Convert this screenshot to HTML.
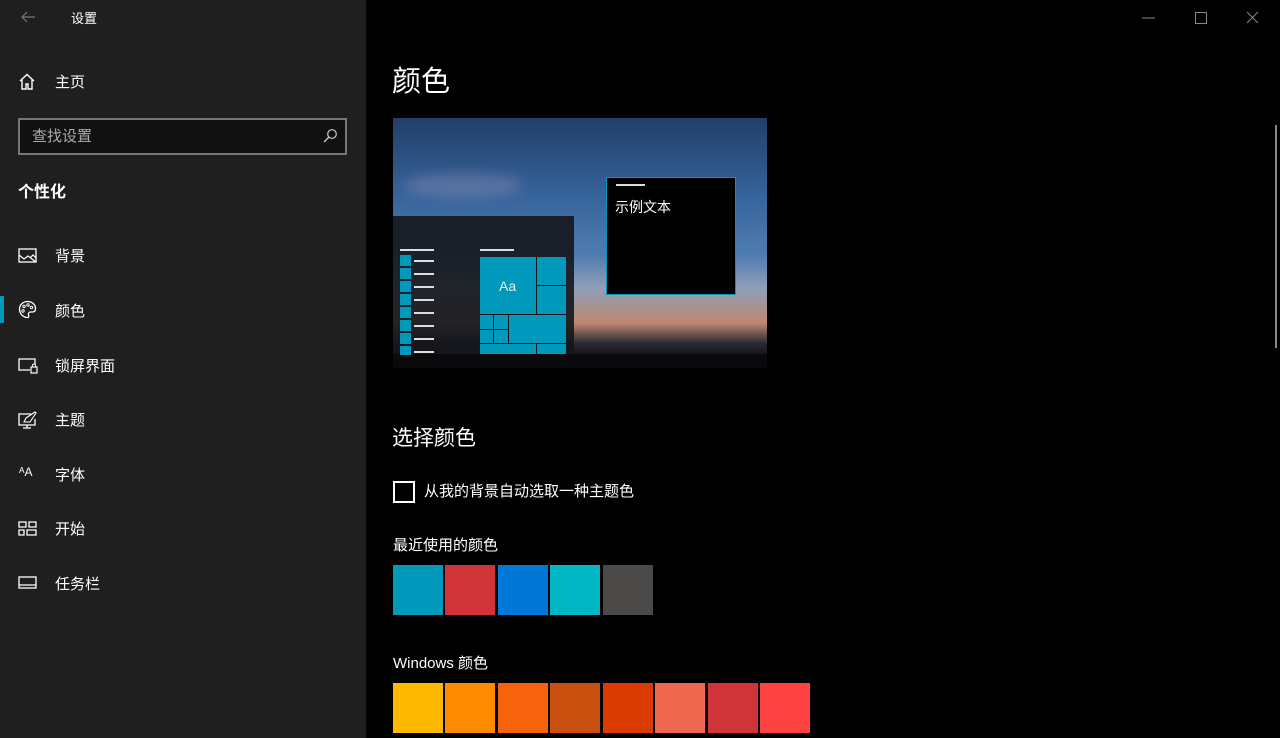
<!DOCTYPE html>
<html><head><meta charset="utf-8"><style>
*{margin:0;padding:0;box-sizing:border-box}
body{width:1280px;height:738px;background:#000;overflow:hidden;position:relative;font-family:"Liberation Sans","Noto Sans CJK SC",sans-serif;color:#fff}
.side{position:absolute;left:0;top:0;width:366px;height:738px;background:#1f1f1f}
.t{position:absolute;white-space:nowrap}
.nav{position:absolute;left:55px;font-size:15px;margin-top:-2px}
.ic{position:absolute;left:18px}
.sw{position:absolute;width:50px;height:50px}
</style></head><body>
<div class="side">
<svg class="ic" style="left:20px;top:10px" width="16" height="14" viewBox="0 0 16 14"><path d="M15 7H2M7 2L2 7l5 5" stroke="#777" fill="none" stroke-width="1.2"/></svg>
<div class="t" style="left:71px;top:8px;font-size:13px">设置</div>
<svg class="ic" style="top:73px" width="18" height="17" viewBox="0 0 18 17"><path d="M2 8L9 1.5 16 8M4 6.5V16h4v-5h2v5h4V6.5" stroke="#fff" fill="none" stroke-width="1.4"/></svg>
<div class="nav" style="top:73px">主页</div>
<div style="position:absolute;left:18px;top:118px;width:329px;height:37px;border:2px solid #777;background:#111"></div>
<div class="t" style="left:32px;top:125px;font-size:15px;color:#aaa">查找设置</div>
<svg style="position:absolute;left:322px;top:128px" width="16" height="16" viewBox="0 0 16 16"><circle cx="10" cy="6" r="4.3" stroke="#ccc" fill="none" stroke-width="1.2"/><path d="M7 9L2 14" stroke="#ccc" stroke-width="1.3"/></svg>
<div class="t" style="left:18px;top:178px;font-size:16px;font-weight:bold">个性化</div>
<svg class="ic" style="top:248px" width="19" height="16" viewBox="0 0 19 16"><rect x="1" y="1" width="17" height="13" stroke="#fff" fill="none" stroke-width="1.3"/><path d="M1 7l5 4 4-3 8 6M12 10l3-3 3 3" stroke="#fff" fill="none" stroke-width="1.2"/></svg>
<div class="nav" style="top:247px">背景</div>
<div style="position:absolute;left:0;top:296px;width:4px;height:27px;background:#0099bc"></div>
<svg class="ic" style="top:300px" width="19" height="19" viewBox="0 0 19 19"><path d="M9.5 1.5C5 1.5 1.5 5 1.5 9c0 4.5 3.5 8.5 8 8.5 1.5 0 1.5-1.5 1-2.5-.5-1.5.5-3 2-3h2c2 0 3-1.5 3-3.5 0-4-3.5-7-8-7z" stroke="#fff" fill="none" stroke-width="1.3"/><circle cx="6" cy="6.5" r="1.2" stroke="#fff" fill="none"/><circle cx="10" cy="5" r="1.2" stroke="#fff" fill="none"/><circle cx="13.5" cy="7.5" r="1.2" stroke="#fff" fill="none"/><circle cx="5" cy="11" r="1.2" stroke="#fff" fill="none"/></svg>
<div class="nav" style="top:302px">颜色</div>
<svg class="ic" style="top:357px" width="20" height="17" viewBox="0 0 20 17"><path d="M12 13H1V2h16v5" stroke="#fff" fill="none" stroke-width="1.3"/><rect x="13" y="10" width="6" height="6" stroke="#fff" fill="none" stroke-width="1.2"/><path d="M14.5 10V8.5a1.5 1.5 0 013 0V10" stroke="#fff" fill="none"/></svg>
<div class="nav" style="top:357px">锁屏界面</div>
<svg class="ic" style="top:411px" width="20" height="19" viewBox="0 0 20 19"><path d="M13 3H1v11h16V8M5 17h8M9 14v3" stroke="#fff" fill="none" stroke-width="1.3"/><path d="M6 11l2-4 9-6 1 1-6 9z" stroke="#fff" fill="none" stroke-width="1.1"/></svg>
<div class="nav" style="top:411px">主题</div>
<div class="t" style="left:19px;top:465px;font-size:12px">ᴬA</div>
<div class="nav" style="top:466px">字体</div>
<svg class="ic" style="top:521px" width="19" height="15" viewBox="0 0 19 15"><path d="M1 1h7v5H1zM11 1h7v5h-7zM1 9h5v5H1zM9 9h9v5H9z" stroke="#fff" fill="none" stroke-width="1.3"/></svg>
<div class="nav" style="top:520px">开始</div>
<svg class="ic" style="top:576px" width="19" height="13" viewBox="0 0 19 13"><rect x="1" y="1" width="17" height="11" stroke="#fff" fill="none" stroke-width="1.3"/><path d="M1 9h17" stroke="#fff" stroke-width="1.3"/></svg>
<div class="nav" style="top:575px">任务栏</div>
</div>

<svg style="position:absolute;left:1142px;top:10px" width="120" height="16"><path d="M0 8h13" stroke="#888"/><rect x="53.5" y="2.5" width="11" height="11" stroke="#888" fill="none"/><path d="M105 2l11 11M116 2l-11 11" stroke="#888"/></svg>
<div style="position:absolute;left:1275px;top:125px;width:2px;height:223px;background:#888"></div>

<div class="t" style="left:392px;top:58px;font-size:29px">颜色</div>

<div style="position:absolute;left:393px;top:118px;width:374px;height:250px;overflow:hidden;background:linear-gradient(180deg,#233e6a 0%,#35629a 30%,#4f7cb0 55%,#8fa0b8 68%,#c08870 82%,#2a2a35 90%,#0d0d10 96%)">
<div style="position:absolute;left:10px;top:55px;width:120px;height:25px;border-radius:50%;background:rgba(200,170,200,.25);filter:blur(6px)"></div>
<div style="position:absolute;left:0;top:98px;width:181px;height:152px;background:rgba(20,22,28,.9)"></div>
<div style="position:absolute;left:0;top:236px;width:374px;height:14px;background:#0a0a0c"></div>
<div style="position:absolute;left:7px;top:131px;width:34px;height:2px;background:#ddd"></div>
<div style="position:absolute;left:87px;top:131px;width:34px;height:2px;background:#ddd"></div>
<div style="position:absolute;left:7px;top:137px;width:11px;height:100px;background:repeating-linear-gradient(180deg,#0099bc 0 11px,transparent 11px 13px)"></div>
<div style="position:absolute;left:21px;top:142px;width:20px;height:96px;background:repeating-linear-gradient(180deg,#ddd 0 2px,transparent 2px 13px)"></div>
<div style="position:absolute;left:87px;top:139px;width:86px;height:97px;background:#0099bc"></div>
<div class="t" style="left:106px;top:160px;font-size:14px;color:#eee">Aa</div>
<div style="position:absolute;left:143px;top:139px;width:1px;height:57px;background:#111"></div>
<div style="position:absolute;left:144px;top:167px;width:29px;height:1px;background:#111"></div>
<div style="position:absolute;left:87px;top:196px;width:86px;height:1px;background:#111"></div>
<div style="position:absolute;left:87px;top:225px;width:86px;height:1px;background:#111"></div>
<div style="position:absolute;left:100px;top:196px;width:1px;height:29px;background:#111"></div>
<div style="position:absolute;left:115px;top:196px;width:1px;height:29px;background:#111"></div>
<div style="position:absolute;left:87px;top:211px;width:28px;height:1px;background:#111"></div>
<div style="position:absolute;left:143px;top:225px;width:1px;height:12px;background:#111"></div>
<div style="position:absolute;left:213px;top:59px;width:130px;height:118px;background:#000;border:1px solid #0099bc"></div>
<div style="position:absolute;left:223px;top:66px;width:29px;height:2px;background:#ddd"></div>
<div class="t" style="left:222px;top:79px;font-size:14px">示例文本</div>
</div>

<div class="t" style="left:392px;top:422px;font-size:21px">选择颜色</div>
<div style="position:absolute;left:393px;top:481px;width:22px;height:22px;border:2px solid #fff"></div>
<div class="t" style="left:424px;top:480px;font-size:15px">从我的背景自动选取一种主题色</div>
<div class="t" style="left:393px;top:534px;font-size:15px">最近使用的颜色</div>
<div class="sw" style="left:393px;top:565px;background:#0099bc"></div>
<div class="sw" style="left:445px;top:565px;background:#d13438"></div>
<div class="sw" style="left:498px;top:565px;background:#0078d7"></div>
<div class="sw" style="left:550px;top:565px;background:#00b7c3"></div>
<div class="sw" style="left:603px;top:565px;background:#4c4a48"></div>
<div class="t" style="left:393px;top:652px;font-size:15px">Windows 颜色</div>
<div class="sw" style="left:393px;top:683px;background:#ffb900"></div>
<div class="sw" style="left:445px;top:683px;background:#ff8c00"></div>
<div class="sw" style="left:498px;top:683px;background:#f7630c"></div>
<div class="sw" style="left:550px;top:683px;background:#ca5010"></div>
<div class="sw" style="left:603px;top:683px;background:#da3b01"></div>
<div class="sw" style="left:655px;top:683px;background:#ef6950"></div>
<div class="sw" style="left:708px;top:683px;background:#d13438"></div>
<div class="sw" style="left:760px;top:683px;background:#ff4343"></div>
</body></html>
